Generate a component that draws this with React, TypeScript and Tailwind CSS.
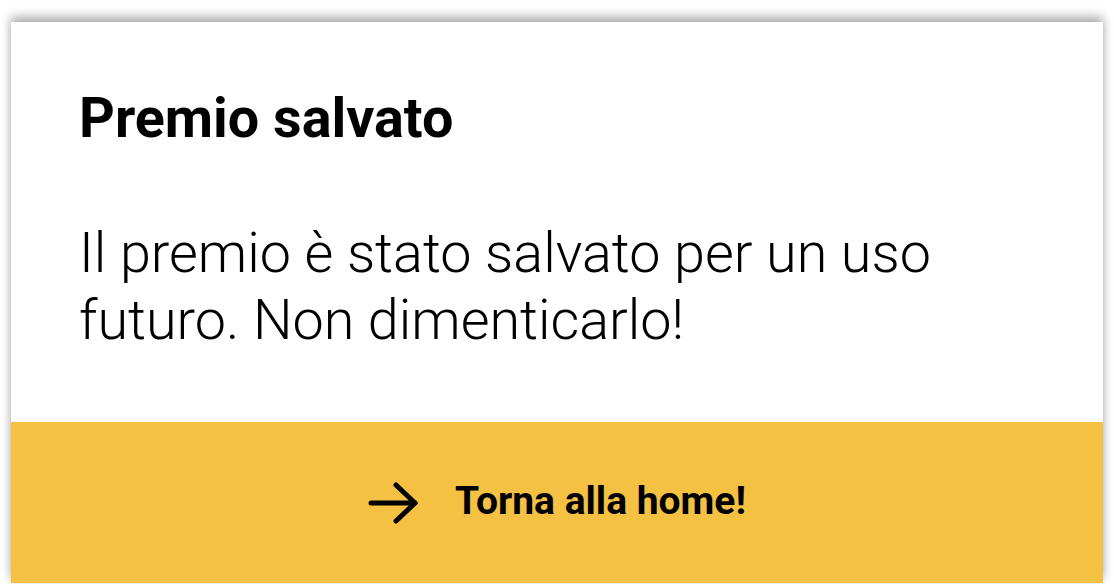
export default function App() {
  return (
    <div className="h-[584px] w-[1114px] overflow-hidden bg-white px-[11px] pt-[22px] font-['Roboto',sans-serif] text-black">
      <div className="flex h-[561px] flex-col bg-white shadow-[0_-6px_10px_rgba(0,0,0,0.28),0_0_8px_rgba(0,0,0,0.12)]">
        <div className="flex-1 px-[68px] pt-[63px]">
          <h1 className="text-[55.7px] font-bold leading-[66px]">Premio salvato</h1>
          <p className="mt-[69px] text-[55.7px] font-light leading-[67px]">
            Il premio è stato salvato per un uso
            <br />
            futuro. Non dimenticarlo!
          </p>
        </div>
        <button className="flex h-[161px] items-center justify-center gap-[37px] bg-[#f5c143]">
          <svg width="50" height="44" viewBox="0 0 50 44" fill="none" stroke="currentColor" strokeWidth="5" strokeLinecap="round" strokeLinejoin="round">
            <path d="M3 22H47" />
            <path d="M28 4L47 22L28 40" />
          </svg>
          <span className="mb-[4px] text-[39px] font-bold leading-[46px]">Torna alla home!</span>
        </button>
      </div>
    </div>
  );
}
